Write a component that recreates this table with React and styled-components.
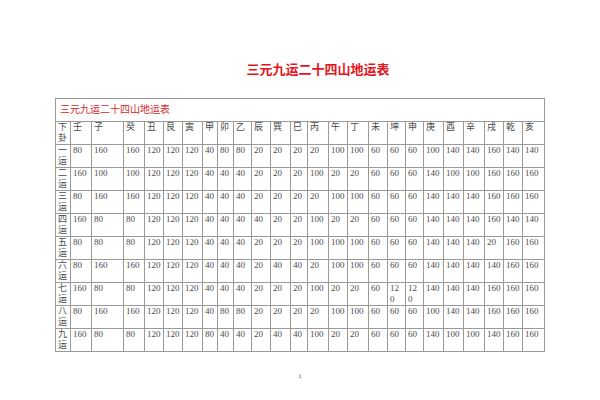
import React from "react";
import styled, { createGlobalStyle } from "styled-components";

const Global = createGlobalStyle`
  html, body { margin: 0; padding: 0; background: #fff; }
`;

const Page = styled.div`
  width: 600px;
  height: 400px;
  background: #fff;
  overflow: hidden;
  font-family: "Liberation Serif", "Noto Sans CJK SC", serif;
`;

const Heading = styled.h1`
  margin: 61px 0 0;
  padding-left: 36px;
  text-align: center;
  font-family: "Noto Sans CJK SC", sans-serif;
  font-size: 13px;
  line-height: 16px;
  font-weight: 700;
  color: #e4141b;
`;

const Sheet = styled.div`
  margin-top: 21px;
  padding-left: 55px;
`;

const Table = styled.table`
  border-collapse: collapse;
  table-layout: fixed;
  width: 490px;
  border: 1px solid #8f8f8f;
`;

const Caption = styled.td`
  height: 22px;
  padding: 0 0 0 4px;
  border: 1px solid #9a9a9a;
  font-size: 10px;
  line-height: 22px;
  color: #d8262a;
  font-family: "Liberation Serif", "Noto Sans CJK SC", serif;
`;

const Cell = styled.td`
  height: 22px;
  padding: 0 ${(p) => (p.$narrow ? "5px" : "0")} 0 2px;
  border: 1px solid #9a9a9a;
  vertical-align: top;
  font-size: 9px;
  line-height: 11px;
  color: #4a4a4a;
  word-break: break-all;
  overflow: hidden;
`;

const PageNum = styled.div`
  margin-top: 20px;
  text-align: center;
  font-size: 7px;
  line-height: 8px;
  color: #555;
`;

const widths = [15, 21, 32, 21, 19, 19, 20, 15, 16, 18, 19, 20, 17, 21, 19, 21, 19, 18, 18, 20, 20, 21, 19, 19, 22];
const heads = ["下卦", "壬", "子", "癸", "丑", "艮", "寅", "甲", "卯", "乙", "辰", "巽", "巳", "丙", "午", "丁", "未", "坤", "申", "庚", "酉", "辛", "戌", "乾", "亥"];
const narrowCols = new Set([0, 17, 18]);

const rows = [
  ["一运", 80, 160, 160, 120, 120, 120, 40, 80, 80, 20, 20, 20, 20, 100, 100, 60, 60, 60, 100, 140, 140, 160, 140, 140],
  ["二运", 160, 100, 100, 120, 120, 120, 40, 40, 40, 20, 20, 20, 100, 20, 20, 60, 60, 60, 140, 100, 100, 160, 160, 160],
  ["三运", 80, 160, 160, 120, 120, 120, 40, 40, 40, 20, 20, 20, 20, 100, 100, 60, 60, 60, 140, 140, 140, 160, 160, 160],
  ["四运", 160, 80, 80, 120, 120, 120, 40, 40, 40, 40, 20, 20, 100, 20, 20, 60, 60, 60, 140, 140, 140, 160, 140, 140],
  ["五运", 80, 80, 80, 120, 120, 120, 40, 40, 40, 20, 20, 20, 100, 100, 100, 60, 60, 60, 140, 140, 140, 20, 160, 160],
  ["六运", 80, 160, 160, 120, 120, 120, 40, 40, 40, 20, 40, 40, 20, 100, 100, 60, 60, 60, 140, 140, 140, 140, 160, 160],
  ["七运", 160, 80, 80, 120, 120, 120, 40, 40, 40, 20, 20, 20, 100, 20, 20, 60, 120, 120, 140, 140, 140, 160, 160, 160],
  ["八运", 80, 160, 160, 120, 120, 120, 40, 80, 80, 20, 20, 20, 20, 100, 100, 60, 60, 60, 100, 140, 140, 160, 160, 160],
  ["九运", 160, 80, 80, 120, 120, 120, 80, 40, 40, 20, 40, 40, 100, 20, 20, 60, 60, 60, 140, 100, 100, 140, 160, 160],
];

export default function App() {
  return (
    <Page>
      <Global />
      <Heading>三元九运二十四山地运表</Heading>
      <Sheet>
        <Table>
          <colgroup>
            {widths.map((w, i) => (
              <col key={i} style={{ width: w }} />
            ))}
          </colgroup>
          <tbody>
            <tr>
              <Caption colSpan={25}>三元九运二十四山地运表</Caption>
            </tr>
            <tr>
              {heads.map((h, i) => (
                <Cell key={h} $narrow={narrowCols.has(i)}>{h}</Cell>
              ))}
            </tr>
            {rows.map((r) => (
              <tr key={r[0]}>
                {r.map((v, i) => (
                  <Cell key={i} $narrow={narrowCols.has(i)}>{v}</Cell>
                ))}
              </tr>
            ))}
          </tbody>
        </Table>
      </Sheet>
      <PageNum>1</PageNum>
    </Page>
  );
}
